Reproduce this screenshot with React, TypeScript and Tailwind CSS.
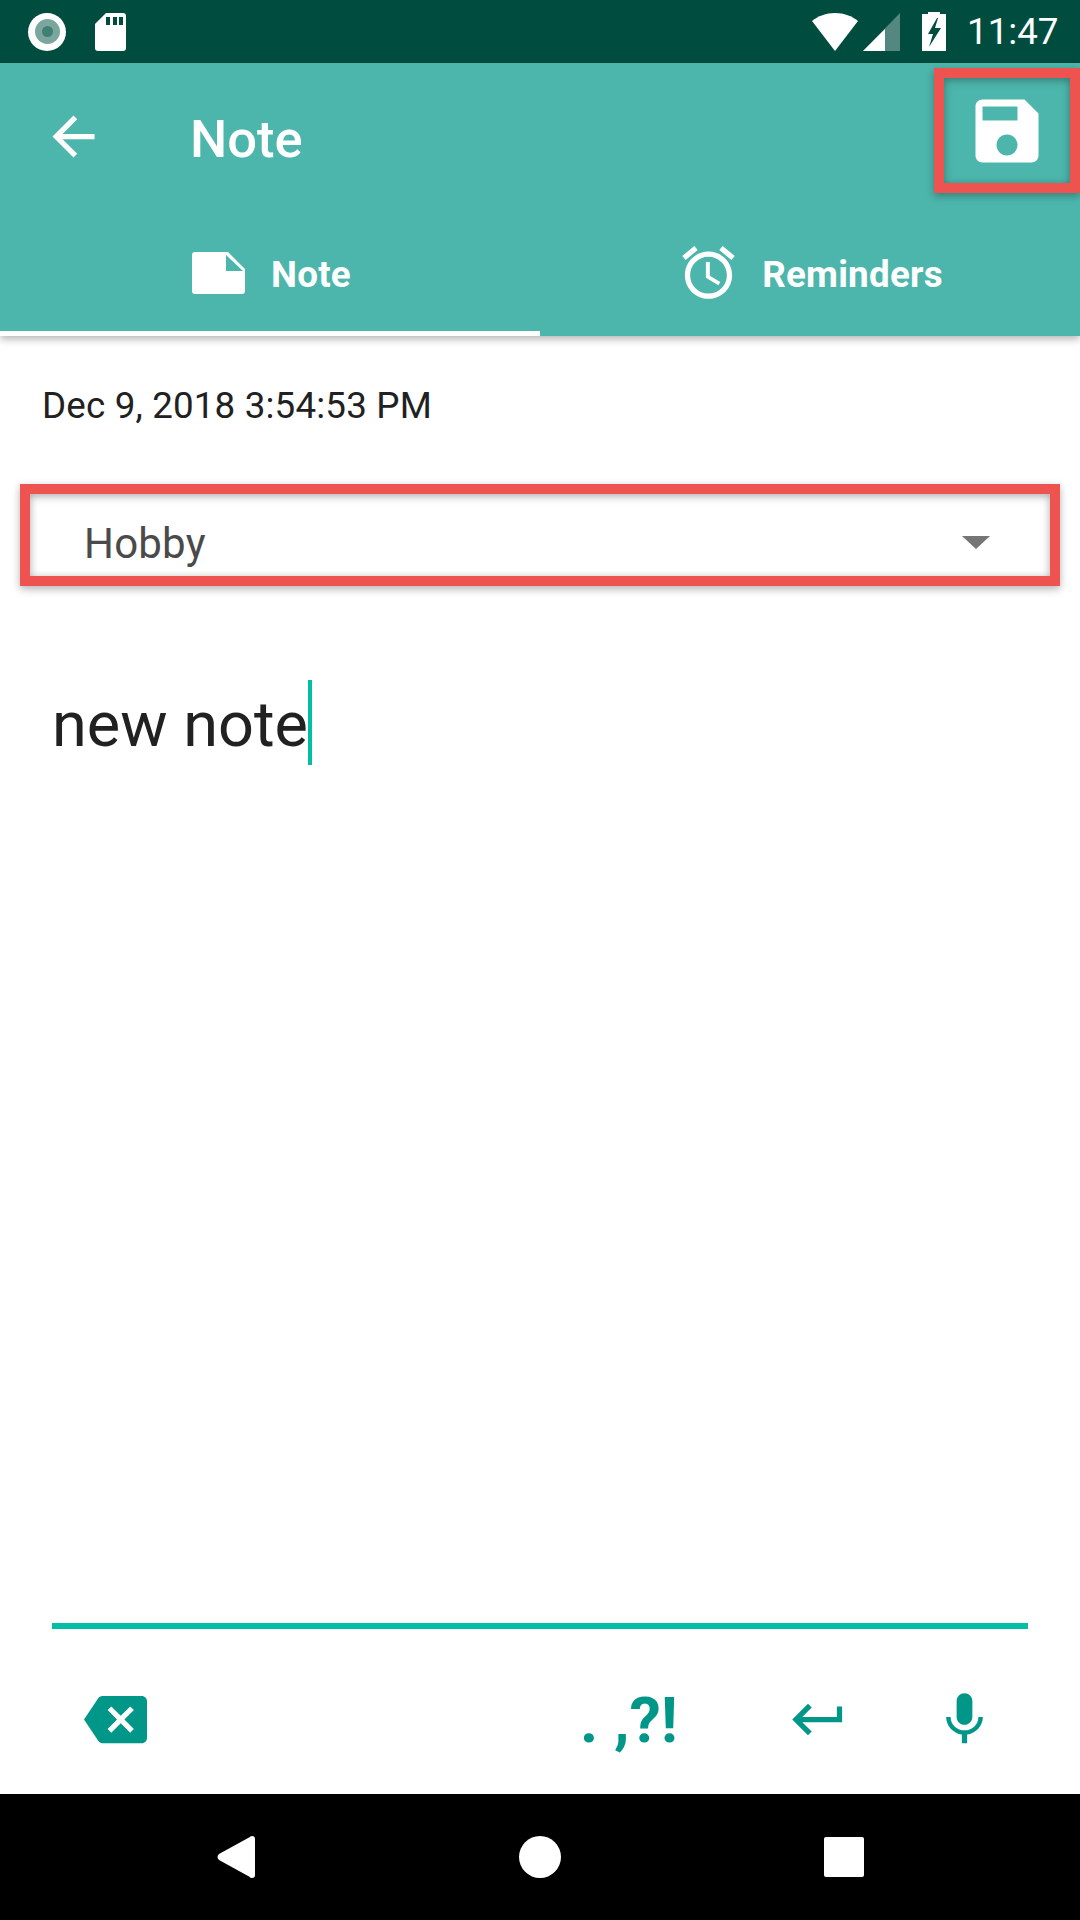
const I = ({ s, w, h, vb, c = "fill-white", d, cn = "" }: { s?: number; w?: number; h?: number; vb: string; c?: string; d: string; cn?: string }) => (
  <svg width={w ?? s} height={h ?? s} viewBox={vb} className={`block shrink-0 ${c} ${cn}`}>
    <path d={d} />
  </svg>
);

export default function App() {
  return (
    <div className="w-[1080px] h-[1920px] flex flex-col bg-white overflow-hidden relative font-['Roboto',sans-serif]">
      {/* status bar */}
      <div className="h-[63px] shrink-0 bg-[#004d40] flex items-center pl-[28px] pr-[22px] text-white">
        <div className="w-[38px] h-[38px] rounded-full bg-white flex items-center justify-center">
          <div className="w-[25px] h-[25px] rounded-full bg-[#7aa69e] flex items-center justify-center">
            <div className="w-[11px] h-[11px] rounded-full bg-[#417f75]" />
          </div>
        </div>
        <svg width="31" height="38" viewBox="0 0 31 38" className="block ml-[29px]">
          <path fill="#fff" d="M11 0H28a3 3 0 0 1 3 3V35a3 3 0 0 1-3 3H3a3 3 0 0 1-3-3V11Z" />
          <path fill="#004d40" d="M11 4h4v8h-4zM18 4h4v8h-4zM24 4h4v8h-4z" />
        </svg>
        <div className="flex-1" />
        <svg width="46" height="38" viewBox="0 0 46 38" className="block">
          <path fill="#fff" d="M0 8C6 3 14 0 23 0s17 3 23 8L23 38Z" />
        </svg>
        <svg width="37" height="38" viewBox="0 0 37 38" className="block ml-[5px]">
          <path fill="#fff" fillOpacity=".33" d="M37 0V38H0Z" />
          <path fill="#fff" d="M22 16V38H0Z" />
        </svg>
        <svg width="24" height="39" viewBox="0 0 24 39" className="block ml-[22px]">
          <path fill="#fff" fillRule="evenodd" d="M6 2V0h12v2h6v37H0V2ZM15 6 6 22h5l-4 13 12-19h-6l3-10Z" />
        </svg>
        <span className="ml-[21px] mt-[2px] text-[36.75px] leading-none w-[91px] whitespace-nowrap">11:47</span>
      </div>

      {/* app bar + tabs */}
      <div className="h-[273px] shrink-0 bg-[#4db6ac] flex flex-col shadow-[0_3px_8px_rgba(0,0,0,0.3)] relative z-10">
        <div className="h-[137px] flex items-start pt-[42px] pl-[42px]">
          <I s={63} vb="0 0 24 24" d="M20 11H7.83l5.59-5.59L12 4l-8 8 8 8 1.41-1.41L7.83 13H20v-2z" />
          <span className="ml-[85px] mt-[3px] text-[52.5px] leading-[63px] font-medium text-white">Note</span>
        </div>
        <div className="h-[136px] flex">
          <div className="w-[540px] flex items-center justify-center border-b-[5px] border-white pt-[14px] pl-[3px] gap-[26px]">
            <svg width="53" height="42" viewBox="0 0 53 42" className="block">
              <path fill="#fff" fillRule="evenodd" d="M3 0H36L53 17V39a3 3 0 0 1-3 3H3a3 3 0 0 1-3-3V3a3 3 0 0 1 3-3ZM34 3V19H51Z" />
            </svg>
            <span className="text-[36.75px] font-bold text-white leading-none tracking-[0.25px] mt-[6px]">Note</span>
          </div>
          <div className="w-[540px] flex items-center justify-center gap-[22px] pt-[9px]">
            <I s={63} vb="0 0 24 24" d="M22 5.72l-4.6-3.86-1.29 1.53 4.6 3.86L22 5.72zM7.88 3.39L6.6 1.86 2 5.71l1.29 1.53 4.59-3.85zM12.5 8H11v6l4.75 2.85.75-1.23-4-2.37V8zM12 4c-4.97 0-9 4.03-9 9s4.03 9 9 9 9-4.03 9-9-4.03-9-9-9zm0 16c-3.87 0-7-3.13-7-7s3.13-7 7-7 7 3.13 7 7-3.13 7-7 7z" />
            <span className="text-[36.75px] font-bold text-white leading-none tracking-[0.25px] mt-[6px]">Reminders</span>
          </div>
        </div>
        {/* highlighted save action */}
        <div className="absolute left-[934px] top-[5px] w-[146px] h-[125px] border-[10px] border-[#ef5350] flex items-center justify-center shadow-[0_3px_8px_rgba(0,0,0,0.3),inset_0_2px_8px_rgba(0,0,0,0.35)]">
          <I s={84} vb="0 0 24 24" d="M17 3H5c-1.11 0-2 .9-2 2v14c0 1.1.89 2 2 2h14c1.1 0 2-.9 2-2V7l-4-4zm-5 16c-1.66 0-3-1.34-3-3s1.34-3 3-3 3 1.34 3 3-1.34 3-3 3zm3-10H5V5h10v4z" />
        </div>
      </div>

      {/* content */}
      <div className="flex-1 flex flex-col min-h-0">
        <div className="pl-[42px] pt-[47px] text-[36.75px] leading-[46px] text-[#212121] tracking-[0.17px]">Dec 9, 2018 3:54:53 PM</div>
        <div className="mx-[20px] mt-[55px] h-[102px] border-[10px] border-[#ef5350] flex items-center pl-[54px] pr-[60px] pt-[17px] shadow-[0_3px_8px_rgba(0,0,0,0.3),inset_0_2px_8px_rgba(0,0,0,0.35)]">
          <span className="text-[42px] leading-none text-[#4a4a4a] tracking-[0.2px]">Hobby</span>
          <div className="ml-auto w-0 h-0 border-l-[14px] border-r-[14px] border-t-[13px] border-l-transparent border-r-transparent border-t-[#757575] -mt-[2px]" />
        </div>
        <div className="pl-[52px] mt-[94px] flex items-center h-[85px]">
          <span className="text-[63px] leading-none text-[#212121] mt-[4px]">new note</span>
          <div className="w-[4px] h-[85px] bg-[#00bfa5]" />
        </div>
        <div className="flex-1" />
        <div className="mx-[52px] h-[6px] bg-[#00bfa5]" />
        <div className="h-[165px] flex items-center pt-[16px]">
          <I s={63} vb="0 0 24 24" c="fill-[#009688]" cn="ml-[84px]" d="M22 3H7c-.69 0-1.23.35-1.59.88L0 12l5.41 8.11c.36.53.97.89 1.66.89H22c1.1 0 2-.9 2-2V5c0-1.1-.9-2-2-2zm-3 12.59L17.59 17 14 13.41 10.41 17 9 15.59 12.59 12 9 8.41 10.41 7 14 10.59 17.59 7 19 8.41 15.41 12 19 15.59z" />
          <span className="ml-[433px] w-[102px] text-[63px] leading-none font-bold text-[#009688] whitespace-nowrap mt-[2px]">. ,?!</span>
          <I s={63} vb="0 0 24 24" c="fill-[#009688]" cn="ml-[105px]" d="M19 7v4H5.83l3.58-3.59L8 6l-6 6 6 6 1.41-1.41L5.83 13H21V7z" />
          <I s={63} vb="0 0 24 24" c="fill-[#009688]" cn="ml-[83px]" d="M12 14c1.66 0 2.99-1.34 2.99-3L15 5c0-1.66-1.34-3-3-3S9 3.34 9 5v6c0 1.66 1.34 3 3 3zm5.3-3c0 3-2.54 5.1-5.3 5.1S6.7 14 6.7 11H5c0 3.41 2.72 6.23 6 6.72V21h2v-3.28c3.28-.48 6-3.3 6-6.72h-1.7z" />
        </div>
      </div>

      {/* nav bar */}
      <div className="h-[126px] shrink-0 bg-black flex items-center">
        <svg width="38" height="42" viewBox="0 0 38 42" className="block ml-[217px]">
          <path fill="#fff" d="M35 0c2 0 3 1 3 3V39c0 2-1 3-3 3-1 0-2-.5-3-1.500L2 24C0 22 0 20 2 18L32 1.500C33 .5 34 0 35 0Z" />
        </svg>
        <div className="w-[42px] h-[42px] rounded-full bg-white ml-[264px]" />
        <div className="w-[40px] h-[40px] rounded-[2px] bg-white ml-[263px]" />
      </div>
    </div>
  );
}
